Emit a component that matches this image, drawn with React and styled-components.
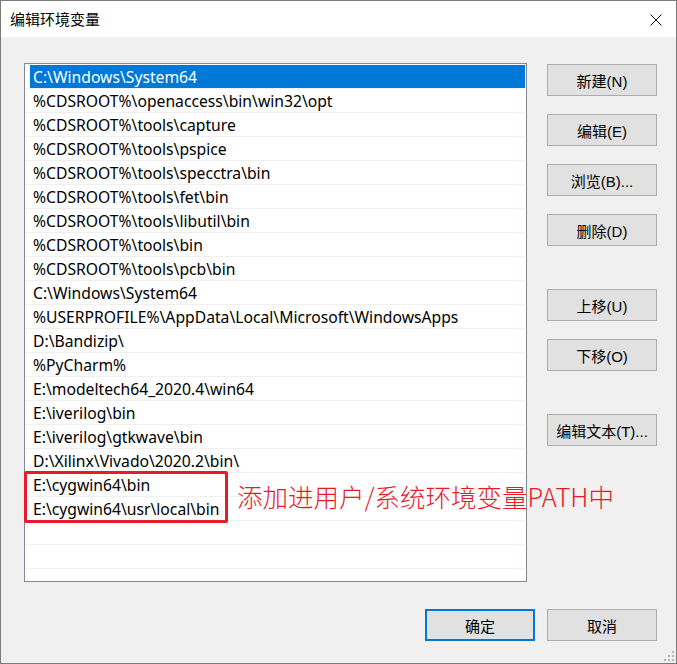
import styled, { createGlobalStyle } from "styled-components";

const GlobalStyle = createGlobalStyle`
  html, body {
    margin: 0;
    padding: 0;
    background: #ffffff;
  }
  * {
    box-sizing: border-box;
  }
`;

const paths = [
  "C:\\Windows\\System64",
  "%CDSROOT%\\openaccess\\bin\\win32\\opt",
  "%CDSROOT%\\tools\\capture",
  "%CDSROOT%\\tools\\pspice",
  "%CDSROOT%\\tools\\specctra\\bin",
  "%CDSROOT%\\tools\\fet\\bin",
  "%CDSROOT%\\tools\\libutil\\bin",
  "%CDSROOT%\\tools\\bin",
  "%CDSROOT%\\tools\\pcb\\bin",
  "C:\\Windows\\System64",
  "%USERPROFILE%\\AppData\\Local\\Microsoft\\WindowsApps",
  "D:\\Bandizip\\",
  "%PyCharm%",
  "E:\\modeltech64_2020.4\\win64",
  "E:\\iverilog\\bin",
  "E:\\iverilog\\gtkwave\\bin",
  "D:\\Xilinx\\Vivado\\2020.2\\bin\\",
  "E:\\cygwin64\\bin",
  "E:\\cygwin64\\usr\\local\\bin",
  "",
  "",
  "",
];

const sideButtons = [
  { label: "新建(N)" },
  { label: "编辑(E)" },
  { label: "浏览(B)..." },
  { label: "删除(D)" },
  { label: "上移(U)", spaced: true },
  { label: "下移(O)" },
  { label: "编辑文本(T)...", spaced: true },
];

export default function App() {
  return (
    <>
      <GlobalStyle />
      <Window>
        <TitleBar>
          <Title>编辑环境变量</Title>
          <CloseButton>
            <svg width="12" height="12" viewBox="0 0 12 12">
              <path d="M0.5 0.5 L11.5 11.5 M11.5 0.5 L0.5 11.5" stroke="#111" strokeWidth="1" />
            </svg>
          </CloseButton>
        </TitleBar>
        <Body>
          <Main>
            <ListBox>
              {paths.map((p, i) => (
                <Row key={i}>
                  <Cell $selected={i === 0}>{p}</Cell>
                </Row>
              ))}
            </ListBox>
            <SideColumn>
              {sideButtons.map((b) => (
                <Button key={b.label} $spaced={b.spaced}>
                  {b.label}
                </Button>
              ))}
            </SideColumn>
          </Main>
          <Footer>
            <Button $primary>确定</Button>
            <Button>取消</Button>
          </Footer>
          <Annotation>
            <RedBox />
            <RedNote>添加进用户/系统环境变量PATH中</RedNote>
          </Annotation>
        </Body>
        <Grip>
          <svg width="12" height="12" viewBox="0 0 12 12" fill="#b4b4b4">
            <rect x="9" y="1" width="2" height="2" />
            <rect x="5" y="5" width="2" height="2" />
            <rect x="9" y="5" width="2" height="2" />
            <rect x="1" y="9" width="2" height="2" />
            <rect x="5" y="9" width="2" height="2" />
            <rect x="9" y="9" width="2" height="2" />
          </svg>
        </Grip>
      </Window>
    </>
  );
}

const Window = styled.div`
  position: relative;
  width: 677px;
  height: 664px;
  border: 1px solid #7a7a7a;
  background: #f0f0f0;
  display: flex;
  flex-direction: column;
  font-family: "Noto Sans", "Noto Sans CJK SC", sans-serif;
  overflow: hidden;
`;

const TitleBar = styled.div`
  height: 36px;
  background: #ffffff;
  display: flex;
  align-items: center;
  justify-content: space-between;
  padding: 0 14px 0 9px;
`;

const Title = styled.div`
  font-family: "Noto Sans CJK SC", sans-serif;
  font-size: 15px;
  color: #000000;
  margin-top: -1px;
`;

const CloseButton = styled.div`
  width: 12px;
  height: 12px;
  display: flex;
  margin-top: 1px;
`;

const Body = styled.div`
  position: relative;
  flex: 1;
  padding: 26px 19px 0 23px;
`;

const Main = styled.div`
  display: flex;
  gap: 20px;
`;

const ListBox = styled.div`
  width: 504px;
  height: 519px;
  border: 1px solid #828790;
  background: #ffffff;
  padding: 1px 1px 0 1px;
  overflow: hidden;
`;

const Row = styled.div`
  height: 24px;
  border-bottom: 1px solid #f0f0f0;
  display: flex;
`;

const Cell = styled.div`
  flex: 1;
  margin-left: 4px;
  padding-left: 3px;
  display: flex;
  align-items: center;
  font-family: "Noto Sans", "Noto Sans CJK SC", sans-serif;
  font-size: 15.7px;
  color: ${(p) => (p.$selected ? "#ffffff" : "#000000")};
  background: ${(p) => (p.$selected ? "#0078d7" : "transparent")};
  white-space: nowrap;
`;

const SideColumn = styled.div`
  display: flex;
  flex-direction: column;
  gap: 18px;
  padding-top: 1px;
`;

const Button = styled.div`
  width: 110px;
  height: 32px;
  display: flex;
  align-items: center;
  justify-content: center;
  background: #e1e1e1;
  border: ${(p) => (p.$primary ? "2px solid #0078d7" : "1px solid #adadad")};
  font-family: "Liberation Sans", "Noto Sans CJK SC", sans-serif;
  font-size: 15px;
  color: #000000;
  margin-top: ${(p) => (p.$spaced ? "25px" : "0")};
`;

const Footer = styled.div`
  display: flex;
  justify-content: flex-end;
  gap: 12px;
  margin-top: 27px;
`;

const Annotation = styled.div`
  position: absolute;
  left: 23px;
  top: 434px;
  display: flex;
  align-items: center;
  gap: 9px;
`;

const RedBox = styled.div`
  width: 204px;
  height: 52px;
  border: 3px solid #e81c28;
  border-radius: 2px;
`;

const RedNote = styled.div`
  font-family: "Noto Sans CJK SC", sans-serif;
  font-size: 25.5px;
  font-weight: 300;
  color: #e81c28;
  margin-top: -3px;
`;

const Grip = styled.div`
  position: absolute;
  right: 1px;
  bottom: 1px;
  display: flex;
`;
